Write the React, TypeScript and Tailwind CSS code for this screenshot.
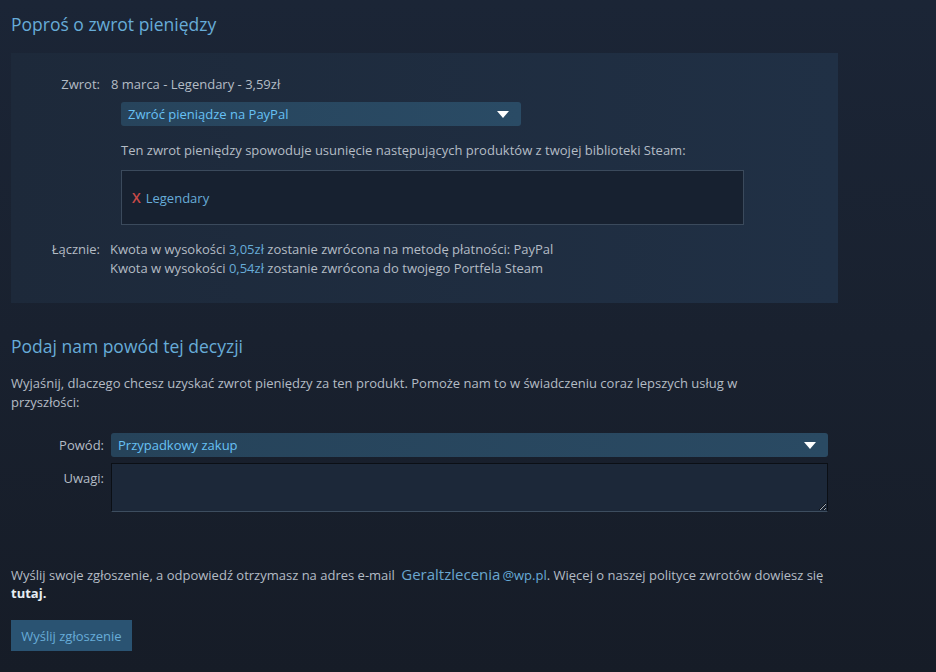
function Caret() {
  return (
    <svg width="12" height="7" viewBox="0 0 12 7" className="shrink-0">
      <path d="M0 0 H12 L6 7 Z" fill="#ffffff" />
    </svg>
  );
}

export default function App() {
  return (
    <div
      className="min-h-[672px] w-[936px] bg-gradient-to-b from-[#1b2536] via-[#19212f] to-[#161c27] text-[13px] leading-[18px] text-[#b4bcc5]"
      style={{ fontFamily: '"Open Sans", "Liberation Sans", Arial, sans-serif' }}
    >
      <div className="px-[11px] pt-[11px]">
        <h2 className="text-[17.5px] leading-[26px] text-[#67acd8]">Poproś o zwrot pieniędzy</h2>

        <div className="mt-[16px] w-[827px] bg-gradient-to-r from-[#1d293a] to-[#203045] pb-[25px] pt-[22px]">
          <div className="flex">
            <div className="w-[99px] pr-[10px] text-right">Zwrot:</div>
            <div className="pl-[1px]">8 marca - Legendary - 3,59zł</div>
          </div>

          <div className="ml-[110px] mt-[9px] flex h-[24px] w-[400px] items-center justify-between rounded-[3px] bg-gradient-to-r from-[#27445c] to-[#2a4b65] pl-[7px] pr-[12px] text-[#67c1f5]">
            <span>Zwróć pieniądze na PayPal</span>
            <Caret />
          </div>

          <div className="ml-[110px] mt-[15px]">
            Ten zwrot pieniędzy spowoduje usunięcie następujących produktów z twojej biblioteki Steam:
          </div>

          <div className="ml-[110px] mt-[11px] flex h-[55px] w-[623px] items-center border border-[#3b4a5c] bg-[#172130] pl-[10px]">
            <span className="mr-[5px] text-[14px] font-semibold text-[#c84a48]">X</span>
            <span className="text-[#67acd8]">Legendary</span>
          </div>

          <div className="mt-[15px] flex leading-[19px]">
            <div className="w-[99px] pr-[10px] text-right">Łącznie:</div>
            <div>
              <div>
                Kwota w wysokości <span className="text-[#67acd8]">3,05zł</span> zostanie zwrócona na metodę płatności: PayPal
              </div>
              <div>
                Kwota w wysokości <span className="text-[#67acd8]">0,54zł</span> zostanie zwrócona do twojego Portfela Steam
              </div>
            </div>
          </div>
        </div>

        <h2 className="mt-[30px] text-[17.5px] leading-[26px] text-[#67acd8]">Podaj nam powód tej decyzji</h2>

        <p className="mt-[15px] w-[740px] leading-[19px]">
          Wyjaśnij, dlaczego chcesz uzyskać zwrot pieniędzy za ten produkt. Pomoże nam to w świadczeniu coraz lepszych usług w przyszłości:
        </p>

        <div className="mt-[21px] flex items-center">
          <div className="w-[100px] pr-[7px] text-right">Powód:</div>
          <div className="flex h-[24px] w-[717px] items-center justify-between rounded-[3px] bg-gradient-to-r from-[#26435a] to-[#2a4a63] pl-[7px] pr-[12px] text-[#67c1f5]">
            <span>Przypadkowy zakup</span>
            <Caret />
          </div>
        </div>

        <div className="mt-[6px] flex">
          <div className="w-[100px] pr-[7px] pt-[6px] text-right">Uwagi:</div>
          <textarea className="h-[49px] w-[717px] resize-y border border-[#0b0f15] border-b-[#3d4d5f] bg-[#1c2839] outline-none" />
        </div>

        <div className="mt-[53px] leading-[18px]">
          Wyślij swoje zgłoszenie, a odpowiedź otrzymasz na adres e-mail{" "}
          <span className="ml-[3px] text-[15px] text-[#6aa6cf]">Geraltzlecenia</span>
          <span className="ml-[2px] text-[#67acd8]">@wp.pl</span>. Więcej o naszej polityce zwrotów dowiesz się
          <br />
          <span className="font-bold text-[#e6edf3]">tutaj.</span>
        </div>

        <button className="mt-[18px] h-[31px] w-[121px] bg-[#2a5372] text-[#67acd8]">
          Wyślij zgłoszenie
        </button>
      </div>
    </div>
  );
}
